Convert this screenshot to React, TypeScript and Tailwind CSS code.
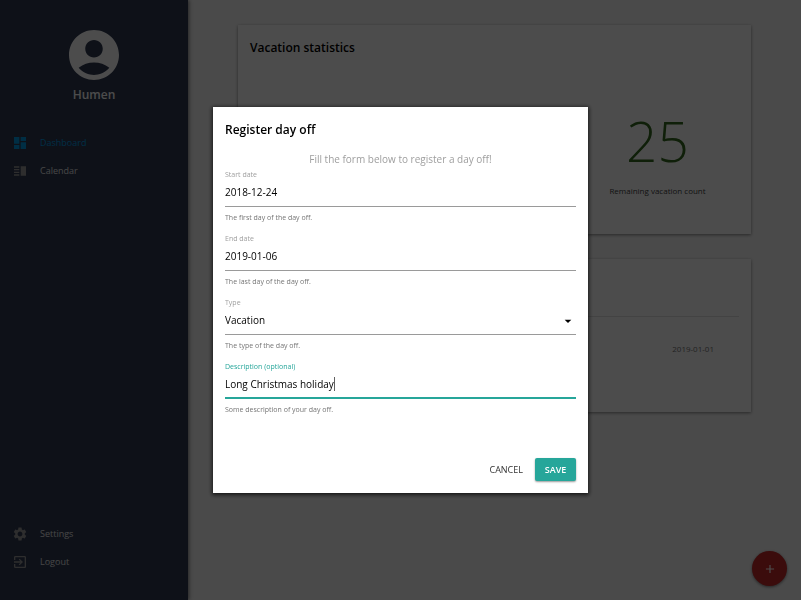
import { useState } from "react";
import type { IconType } from "react-icons";
import {
  MdAccountCircle,
  MdAdd,
  MdArrowDropDown,
  MdDashboard,
  MdExitToApp,
  MdSettings,
  MdVerticalSplit,
} from "react-icons/md";

interface NavItemProps {
  icon: IconType;
  label: string;
  active?: boolean;
}

const NavItem: React.FC<NavItemProps> = ({ icon: Icon, label, active }) => (
  <a
    href="#"
    className={`flex h-7 items-center gap-3 px-3 text-[9px] ${
      active ? "text-[#039be5]" : "font-medium text-[#e8e8e8]"
    }`}
  >
    <Icon className={active ? "size-4" : "size-4 text-[#9a9a9a]"} />
    {label}
  </a>
);

const Sidebar: React.FC = () => (
  <aside className="sticky top-0 z-10 flex h-screen w-[188px] shrink-0 flex-col justify-between bg-[#2f3a52] pt-[25px] pb-6 shadow-[1px_0_4px_rgba(0,0,0,0.5)]">
    <div>
      <div className="flex flex-col items-center text-white">
        <MdAccountCircle className="size-[60px]" />
        <p className="text-[12px] leading-5 font-semibold">Humen</p>
      </div>
      <nav className="mt-6">
        <NavItem icon={MdDashboard} label="Dashboard" active />
        <NavItem icon={MdVerticalSplit} label="Calendar" />
      </nav>
    </div>
    <nav>
      <NavItem icon={MdSettings} label="Settings" />
      <NavItem icon={MdExitToApp} label="Logout" />
    </nav>
  </aside>
);

const Dashboard: React.FC = () => (
  <main className="flex min-w-0 flex-1 flex-col gap-[25px] px-[50px] py-[25px]">
    <section className="bg-white px-3 pt-3 pb-[37px] shadow-[0_1px_3px_rgba(0,0,0,0.45)]">
      <h2 className="text-[12px] leading-[22px] font-semibold">
        Vacation statistics
      </h2>
      <div className="mt-[52px] grid grid-cols-3 text-center">
        <div className="col-start-3">
          <p className="text-[55px] leading-[60px] font-light text-[#33691e]">
            25
          </p>
          <p className="mt-3.5 text-[8px] leading-3 text-[#424242]">
            Remaining vacation count
          </p>
        </div>
      </div>
    </section>
    <section className="bg-white px-3 py-[57px] shadow-[0_1px_3px_rgba(0,0,0,0.45)]">
      <div className="flex justify-end border-t border-[#e0e0e0] pt-[26px] pr-[25px] text-[8px] leading-3 font-medium text-[#757575]">
        <time dateTime="2019-01-01">2019-01-01</time>
      </div>
    </section>
  </main>
);

interface FieldProps {
  id: string;
  label: string;
  hint: string;
  focused?: boolean;
  children: React.ReactNode;
}

const Field: React.FC<FieldProps> = ({
  id,
  label,
  hint,
  focused,
  children,
}) => (
  <div>
    <label
      htmlFor={id}
      className={`block text-[7px] leading-3 ${
        focused ? "text-[#26a69a]" : "text-[#9e9e9e]"
      }`}
    >
      {label}
    </label>
    <div
      className={`flex h-[26px] items-center pb-0.5 text-[10px] text-black ${
        focused ? "border-b-2 border-[#26a69a]" : "border-b border-[#9a9a9a]"
      }`}
    >
      {children}
    </div>
    <p className="mt-[5px] text-[7px] leading-3 text-[#757575]">{hint}</p>
  </div>
);

const DayOffDialog: React.FC = () => {
  const [startDate, setStartDate] = useState("2018-12-24");
  const [endDate, setEndDate] = useState("2019-01-06");
  const [type, setType] = useState("vacation");
  const [description, setDescription] = useState("Long Christmas holiday");

  return (
    <div className="fixed inset-0 z-20 flex items-center justify-center bg-black/70">
      <form
        role="dialog"
        aria-labelledby="dialog-title"
        className="w-[375px] max-w-full bg-white p-3 shadow-[0_1px_4px_1px_rgba(0,0,0,0.7)]"
      >
        <h2
          id="dialog-title"
          className="text-[12px] leading-[22px] font-semibold text-black"
        >
          Register day off
        </h2>
        <p className="mt-2.5 text-center text-[10px] leading-4 text-[#9e9e9e]">
          Fill the form below to register a day off!
        </p>
        <div className="mt-0.5 flex flex-col gap-[9px]">
          <Field
            id="start"
            label="Start date"
            hint="The first day of the day off."
          >
            <input
              id="start"
              className="w-full outline-none"
              value={startDate}
              onChange={(e) => setStartDate(e.target.value)}
            />
          </Field>
          <Field id="end" label="End date" hint="The last day of the day off.">
            <input
              id="end"
              className="w-full outline-none"
              value={endDate}
              onChange={(e) => setEndDate(e.target.value)}
            />
          </Field>
          <Field id="type" label="Type" hint="The type of the day off.">
            <select
              id="type"
              className="w-full appearance-none outline-none"
              value={type}
              onChange={(e) => setType(e.target.value)}
            >
              <option value="vacation">Vacation</option>
              <option value="sick">Sick leave</option>
            </select>
            <MdArrowDropDown className="pointer-events-none -ml-4 size-4 shrink-0" />
          </Field>
          <Field
            id="description"
            label="Description (optional)"
            hint="Some description of your day off."
            focused
          >
            <input
              id="description"
              className="field-sizing-content max-w-full caret-transparent outline-none"
              value={description}
              onChange={(e) => setDescription(e.target.value)}
            />
            <span className="h-3.5 w-px bg-[#616161]" />
          </Field>
        </div>
        <div className="mt-[42px] flex justify-end gap-3 text-[9px]">
          <button type="button" className="text-[#333]">
            CANCEL
          </button>
          <button
            type="submit"
            className="h-[23px] w-[41px] rounded-xs bg-[#26a69a] font-semibold text-white shadow-[0_1px_2px_rgba(0,0,0,0.4)]"
          >
            SAVE
          </button>
        </div>
      </form>
    </div>
  );
};

export default function App() {
  return (
    <div className="flex min-h-screen bg-[#f8f8f8] font-['Open_Sans','Noto_Sans',sans-serif] text-black">
      <Sidebar />
      <Dashboard />
      <button
        type="button"
        aria-label="Register day off"
        className="fixed right-3.5 bottom-3.5 flex size-[35px] items-center justify-center rounded-full bg-[#c62828] text-white shadow-[0_1px_3px_rgba(0,0,0,0.5)]"
      >
        <MdAdd className="size-3.5" />
      </button>
      <DayOffDialog />
    </div>
  );
}
